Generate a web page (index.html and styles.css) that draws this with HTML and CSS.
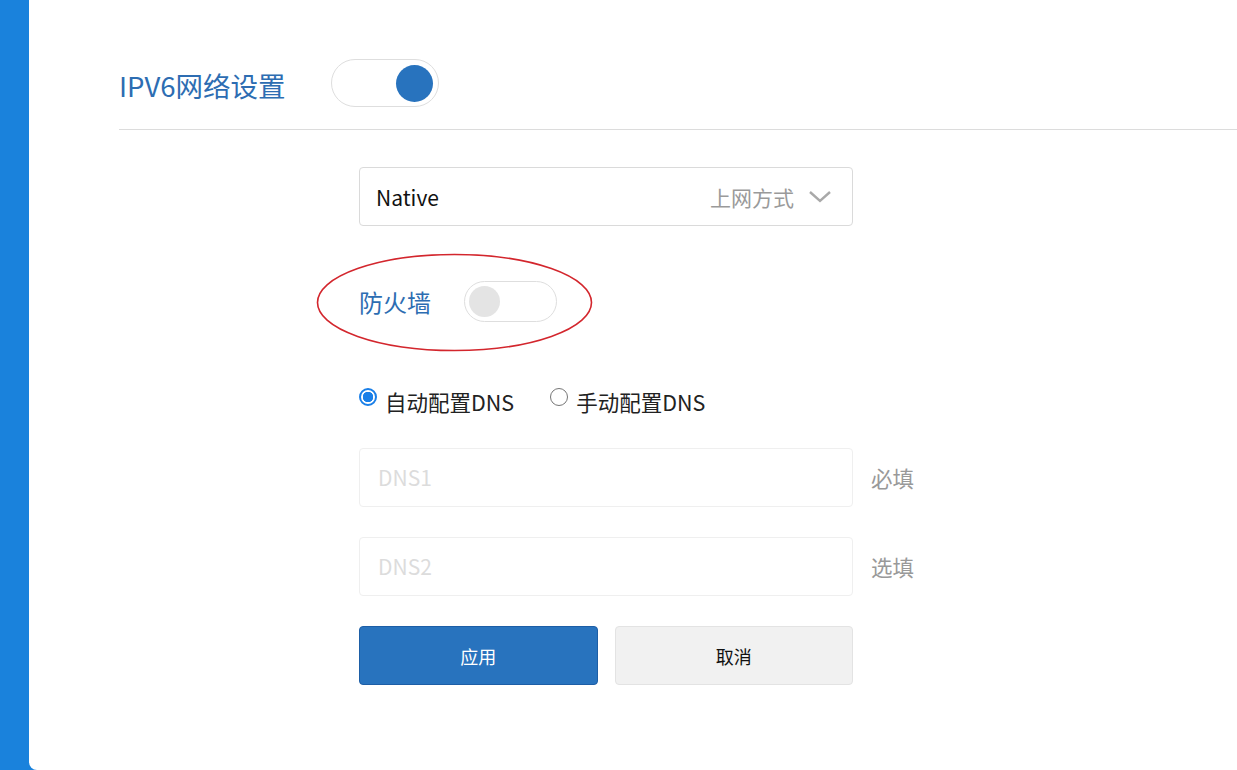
FILE: index.html
```html
<!DOCTYPE html>
<html lang="zh-CN">
<head>
<meta charset="utf-8">
<title>IPV6网络设置</title>
<link rel="stylesheet" href="styles.css">
</head>
<body>
<div class="panel">
  <div class="header">
    <h1 class="title">IPV6网络设置</h1>
    <div class="switch switch-on"><span class="knob"></span></div>
  </div>
  <div class="form">
    <div class="select">
      <span class="select-value">Native</span>
      <span class="select-label">上网方式</span>
      <svg class="chevron" width="24" height="14" viewBox="0 0 24 14"><path d="M2 2 L12 11 L22 2" fill="none" stroke="#a9a9a9" stroke-width="2.4"/></svg>
    </div>
    <div class="firewall">
      <span class="firewall-label">防火墙</span>
      <div class="switch switch-off"><span class="knob"></span></div>
      <svg class="ellipse" width="277" height="99" viewBox="0 0 277 99"><ellipse cx="138.5" cy="49.5" rx="137" ry="48" fill="none" stroke="#d3262d" stroke-width="1.6"/></svg>
    </div>
    <div class="radios">
      <label class="radio"><span class="dot dot-on"></span>自动配置DNS</label>
      <label class="radio"><span class="dot"></span>手动配置DNS</label>
    </div>
    <div class="field">
      <div class="input">DNS1</div>
      <span class="hint">必填</span>
    </div>
    <div class="field">
      <div class="input">DNS2</div>
      <span class="hint">选填</span>
    </div>
    <div class="buttons">
      <button class="btn btn-primary">应用</button>
      <button class="btn btn-default">取消</button>
    </div>
  </div>
</div>
</body>
</html>
```
FILE: styles.css
```css
html, body {
  margin: 0;
  padding: 0;
}
body {
  background: #1a82dc;
  font-family: "Noto Sans CJK SC", "Noto Sans", sans-serif;
  height: 770px;
  overflow: hidden;
}
.panel {
  margin-left: 29px;
  height: 770px;
  background: #fff;
  border-bottom-left-radius: 8px;
  box-sizing: border-box;
}
.header {
  display: flex;
  align-items: center;
  margin-left: 90px;
  padding-top: 59px;
  padding-bottom: 22px;
  border-bottom: 1px solid #dcdcdc;
}
.title {
  margin: 0;
  font-size: 27.5px;
  font-weight: 400;
  line-height: 44px;
  padding-top: 4px;
  color: #2d6db2;
  width: 212px;
}
.switch {
  box-sizing: border-box;
  border: 1px solid #dedede;
  border-radius: 30px;
  background: #fff;
  display: flex;
  align-items: center;
}
.switch-on {
  width: 108px;
  height: 48px;
  justify-content: flex-end;
  padding-right: 5px;
}
.switch-on .knob {
  width: 37px;
  height: 37px;
  border-radius: 50%;
  background: #2873be;
}
.form {
  margin-left: 330px;
  width: 494px;
  padding-top: 37px;
}
.select {
  box-sizing: border-box;
  height: 59px;
  border: 1px solid #dadada;
  border-radius: 4px;
  display: flex;
  align-items: center;
  padding: 0 20px 0 16px;
}
.select-value {
  font-size: 21px;
  color: #111;
  flex: 1;
}
.select-label {
  font-size: 21px;
  color: #9a9a9a;
  margin-right: 14px;
}
.chevron {
  display: block;
}
.firewall {
  position: relative;
  display: flex;
  align-items: center;
  margin-top: 55px;
  height: 41px;
}
.firewall-label {
  font-size: 24px;
  color: #2d6db2;
  width: 105px;
}
.switch-off {
  width: 93px;
  height: 41px;
  padding-left: 4px;
}
.switch-off .knob {
  width: 31px;
  height: 31px;
  border-radius: 50%;
  background: #e4e4e4;
}
.ellipse {
  position: absolute;
  left: -43px;
  top: -28px;
}
.radios {
  display: flex;
  align-items: center;
  margin-top: 66px;
  height: 26px;
}
.radio {
  display: flex;
  align-items: center;
  font-size: 21.5px;
  color: #222;
  margin-right: 36px;
}
.dot {
  box-sizing: border-box;
  width: 18px;
  height: 18px;
  border-radius: 50%;
  border: 1.5px solid #767676;
  margin-right: 8px;
  margin-top: -8px;
  background: #fff;
}
.dot-on {
  border: 2px solid #1a7fe8;
  background: radial-gradient(circle, #1a7fe8 0 5px, #fff 5.5px);
}
.field {
  display: flex;
  align-items: center;
  margin-top: 34px;
}
.field + .field {
  margin-top: 30px;
}
.input {
  box-sizing: border-box;
  flex: 0 0 494px;
  height: 59px;
  border: 1px solid #efefef;
  border-radius: 4px;
  padding-left: 18px;
  font-size: 21px;
  line-height: 57px;
  color: #dcdcdc;
}
.hint {
  margin-left: 18px;
  font-size: 21.5px;
  color: #999;
  white-space: nowrap;
}
.buttons {
  display: flex;
  gap: 17px;
  margin-top: 30px;
}
.btn {
  box-sizing: border-box;
  width: 239px;
  height: 59px;
  border-radius: 4px;
  font-family: "Noto Sans CJK SC", sans-serif;
  font-size: 18px;
}
.btn-primary {
  background: #2873be;
  border: 1px solid #1d5ea6;
  color: #fff;
}
.btn-default {
  background: #f1f1f1;
  border: 1px solid #e3e3e3;
  color: #111;
}
```
